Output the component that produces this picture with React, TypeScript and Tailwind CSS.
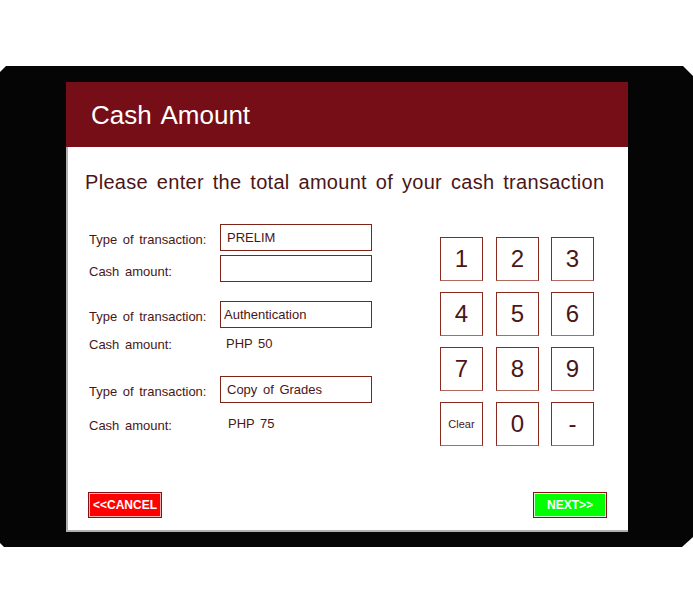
import { useState } from 'react'

const keys = ['1', '2', '3', '4', '5', '6', '7', '8', '9', 'Clear', '0', '-']

function Label({ children, className = '' }: { children: string; className?: string }) {
  return (
    <span className={`w-[131px] shrink-0 pt-[4px] text-[13px] text-[#4a1616] [word-spacing:2px] ${className}`}>
      {children}
    </span>
  )
}

function Box({ children }: { children?: string }) {
  return (
    <div className="flex h-[27px] w-[152px] items-center border border-[#7d2418] px-[6px] text-[13px] text-[#4a1616] [word-spacing:2px]">
      {children}
    </div>
  )
}

export default function App() {
  const [amount, setAmount] = useState('')

  const press = (k: string) => {
    if (k === 'Clear') setAmount('')
    else setAmount(amount + k)
  }

  return (
    <div className="h-[612px] w-[693px] bg-white pt-[66px] font-['Liberation_Sans',Arial,sans-serif]">
      {/* device frame */}
      <div className="h-[481px] w-[693px] bg-[#050505] pl-[66px] pt-[16px] [clip-path:polygon(6px_0,683px_0,693px_10px,693px_471px,682px_481px,4px_481px,0_477px,0_6px)]">
        <div className="flex h-[450px] w-[562px] flex-col bg-white shadow-[inset_2px_-2px_0_#b0b0b0]">
          <div className="flex h-[65px] items-center bg-[#760e17] pl-[25px] pt-[2px]">
            <h1 className="text-[26px] text-white [word-spacing:3px]">Cash Amount</h1>
          </div>

          <div className="flex flex-1 flex-col pl-[19px] pr-[21px] pb-[14px]">
            <p className="mt-[23px] h-[24px] text-[20px] leading-[24px] tracking-[0.3px] text-[#4a1616] [word-spacing:3px]">
              Please enter the total amount of your cash transaction
            </p>

            <div className="mt-[30px] flex">
              {/* form */}
              <div className="flex w-[355px] flex-col pl-[4px]">
                <div className="flex h-[27px] items-center">
                  <Label>Type of transaction:</Label>
                  <Box>PRELIM</Box>
                </div>
                <div className="mt-[4px] flex h-[27px] items-center">
                  <Label className="pt-[7px]">Cash amount:</Label>
                  <Box>{amount}</Box>
                </div>
                <div className="mt-[19px] flex h-[27px] items-center">
                  <Label>Type of transaction:</Label>
                  <div className="flex h-[27px] w-[152px] items-center border border-[#7d2418] px-[3px] text-[13px] text-[#4a1616]">
                    Authentication
                  </div>
                </div>
                <div className="flex h-[30px] items-center">
                  <Label>Cash amount:</Label>
                  <span className="pl-[6px] pt-[2px] text-[13px] text-[#4a1616] [word-spacing:2px]">PHP 50</span>
                </div>
                <div className="mt-[18px] flex h-[27px] items-center">
                  <Label>Type of transaction:</Label>
                  <Box>Copy of Grades</Box>
                </div>
                <div className="mt-[6px] flex h-[30px] items-center">
                  <Label>Cash amount:</Label>
                  <span className="pl-[8px] text-[13px] text-[#4a1616] [word-spacing:2px]">PHP 75</span>
                </div>
              </div>

              {/* keypad */}
              <div className="mt-[13px] grid grid-cols-[56px_55px_43px] gap-y-[11px]">
                {keys.map(k => (
                  <button
                    key={k}
                    onClick={() => press(k)}
                    className={`flex h-[44px] w-[43px] items-center justify-center border border-[#8a2a1e] border-b-[#b06a60] text-[#4a1616] ${
                      k === 'Clear' ? 'text-[11px]' : 'text-[24px]'
                    }`}
                  >
                    {k}
                  </button>
                ))}
              </div>
            </div>

            <div className="mt-auto flex items-center justify-between pl-[3px]">
              <button className="h-[26px] w-[74px] border border-[#8a0f14] bg-[#ff0000] text-[12px] font-bold text-white shadow-[inset_0_0_0_1px_#ffb0b0]">
                &lt;&lt;CANCEL
              </button>
              <button className="h-[26px] w-[74px] border border-[#8a0f14] bg-[#00ff00] text-[12px] font-bold text-white shadow-[inset_0_0_0_1px_#d0ffd0]">
                NEXT&gt;&gt;
              </button>
            </div>
          </div>
        </div>
      </div>
    </div>
  )
}
